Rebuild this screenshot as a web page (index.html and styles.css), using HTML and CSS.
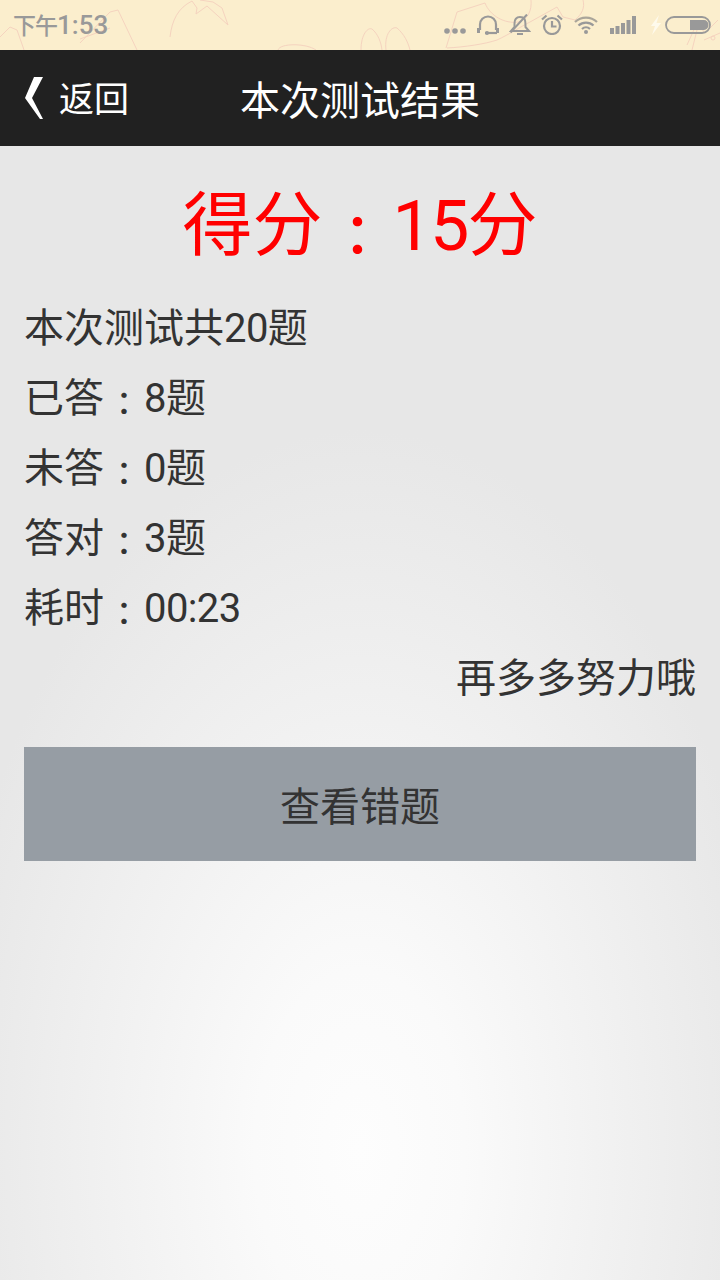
FILE: index.html
```html
<!DOCTYPE html>
<html lang="zh-CN">
<head>
<meta charset="utf-8">
<title>本次测试结果</title>
<link rel="stylesheet" href="styles.css">
</head>
<body>
<div class="status">
  <svg class="wall" width="720" height="50" viewBox="0 0 720 50" fill="none" stroke="#f5d3bf" stroke-width="1">
    <path d="M0 37L10 27L17 30L23 47L24 50"/>
    <path d="M80 43L110 12L118 10L137 50M80 39L110 28"/>
    <path d="M170 37C172 20 178 8 192 1L197 8L196 14L207 6L228 25L222 8L213 2L200 0"/>
    <path d="M278 50C280 43 306 43 316 50"/>
    <path d="M361 50C361 34 368 27 372 29C378 34 381 42 382 50M386 50C384 34 392 26 397 28C404 34 408 42 410 50"/>
    <path d="M446 48L457 12L485 3C490 16 505 24 518 22C528 20 532 10 531 0"/>
    <path d="M447 48C465 47 485 44 497 40C510 34 520 27 530 22L557 7L563 17L575 20C582 14 585 8 583 0"/>
    <path d="M687 45L697 23L705 33L718 20M698 26L692 50M704 40L720 33"/>
    <circle cx="713" cy="38" r="2"/>
  </svg>
  <span class="clock"><span class="clock-cjk">下午</span>1:53</span>
  <div class="indicators">
    <svg class="ico ico-dots" width="22" height="6" viewBox="0 0 22 6" fill="#999"><circle cx="3" cy="3" r="2.800"/><circle cx="11" cy="3" r="2.800"/><circle cx="19" cy="3" r="2.800"/></svg>
    <svg class="ico ico-head" width="22" height="20" viewBox="0 0 22 20" fill="none" stroke="#999" stroke-width="2.200"><path d="M3 15V9.500a8 8 0 0 1 16 0V15"/><path d="M1.500 13v5M20.500 13v5" stroke-width="3"/><path d="M8 18h12"/><circle cx="10" cy="18" r="2" fill="#999" stroke="none"/></svg>
    <svg class="ico ico-bell" width="22" height="21" viewBox="0 0 22 21" fill="none" stroke="#999" stroke-width="2"><path d="M5.500 13V9.500C5.500 5 8 3 11 3C13 3 14.500 3.500 15.500 5C16.500 6.500 16.500 9 16.500 13L20 17H2L5.500 13"/><path d="M8 20h6"/><path d="M1.500 18.500L18 0.500"/></svg>
    <svg class="ico ico-alarm" width="22" height="21" viewBox="0 0 22 21" fill="none" stroke="#999" stroke-width="2.200"><circle cx="11" cy="12" r="8"/><path d="M11 7v5.500h4.500"/><path d="M1 5.500L5.500 1.500M16.500 1.500L21 5.500"/></svg>
    <svg class="ico ico-wifi" width="24" height="18" viewBox="0 0 24 18" fill="none" stroke="#aaa59a" stroke-width="2.200"><path d="M1 6a16 16 0 0 1 22 0"/><path d="M4.500 9.500a11 11 0 0 1 15 0" stroke="#999"/><path d="M8 13a6 6 0 0 1 8 0" stroke="#999"/><circle cx="12" cy="16" r="2" fill="#999" stroke="none"/></svg>
    <svg class="ico ico-sig" width="26" height="18" viewBox="0 0 26 18" fill="#999"><rect x="0" y="12" width="4" height="6"/><rect x="5.500" y="10" width="4" height="8"/><rect x="11" y="7" width="4" height="11"/><rect x="16.500" y="4" width="4" height="14"/><rect x="22" y="0" width="4" height="18"/></svg>
    <svg class="ico ico-bolt" width="12" height="20" viewBox="0 0 12 20" fill="#fefaec"><path d="M9 0L1 11h4l-3 9 9-12H6.500z"/></svg>
    <svg class="ico ico-batt" width="46" height="18" viewBox="0 0 46 18"><rect x="1" y="1" width="44" height="16" rx="8" fill="none" stroke="#999" stroke-width="1.800"/><path d="M25 4h14a4.500 5 0 0 1 0 10H25z" fill="#999"/></svg>
  </div>
</div>
<header class="topbar">
  <div class="back">
    <svg class="chev" width="18" height="42" viewBox="0 0 18 42"><path d="M9 0H18L7 21L18 42H15L0 21Z" fill="#fff"/></svg>
    <span class="back-text">返回</span>
  </div>
  <h1 class="title">本次测试结果</h1>
</header>
<main class="content">
  <div class="score">得分<span class="colon" lang="zh-TW">：</span><span class="score-num">15</span>分</div>
  <ul class="stats">
    <li>本次测试共<span class="num">20</span>题</li>
    <li>已答<span class="colon" lang="zh-TW">：</span><span class="num">8</span>题</li>
    <li>未答<span class="colon" lang="zh-TW">：</span><span class="num">0</span>题</li>
    <li>答对<span class="colon" lang="zh-TW">：</span><span class="num">3</span>题</li>
    <li>耗时<span class="colon" lang="zh-TW">：</span><span class="num">00:23</span></li>
  </ul>
  <p class="cheer">再多多努力哦</p>
  <button class="review" type="button">查看错题</button>
</main>
</body>
</html>
```

FILE: styles.css
```css
* { box-sizing: border-box; }
html, body { margin: 0; padding: 0; }
body {
  width: 720px;
  height: 1280px;
  overflow: hidden;
  display: flex;
  flex-direction: column;
  font-family: Roboto, "Noto Sans CJK SC", sans-serif;
  background: #e7e7e7;
}
.status {
  position: relative;
  height: 50px;
  flex: none;
  display: flex;
  align-items: center;
  justify-content: space-between;
  padding: 0 9px 0 13px;
  background: #fbeecd;
  overflow: hidden;
}
.wall { position: absolute; left: 0; top: 0; }
.clock {
  position: relative;
  font-size: 26px;
  font-weight: 500;
  color: #999;
}
.clock-cjk { font-size: 23px; letter-spacing: -1px; line-height: 1; }
.indicators {
  position: relative;
  display: flex;
  align-items: flex-end;
  height: 24px;
  margin-bottom: 4px;
}
.ico { display: block; }
.ico-dots { margin-bottom: 1px; }
.ico-head { margin-left: 11px; }
.ico-bell { margin-left: 10px; }
.ico-alarm { margin-left: 10px; }
.ico-wifi { margin-left: 11px; margin-bottom: 1px; }
.ico-sig { margin-left: 12px; margin-bottom: 1px; }
.ico-bolt { margin-left: 14px; }
.ico-batt { margin-left: 3px; margin-bottom: 1px; }
.topbar {
  position: relative;
  height: 96px;
  flex: none;
  display: flex;
  align-items: center;
  justify-content: center;
  background: #212121;
  color: #fff;
}
.back {
  position: absolute;
  left: 25px;
  top: 27px;
  display: flex;
  align-items: flex-start;
  gap: 16px;
}
.back-text { font-size: 35px; line-height: 42px; margin-top: 3px; }
.title { margin: 0; font-size: 40px; font-weight: 400; }
.content {
  flex: 1;
  padding: 0 24px;
  background: radial-gradient(ellipse 420px 720px at 360px 1004px, #fdfdfd 0%, #fafafa 25%, #f1f1f1 60%, #e7e7e7 100%);
}
.colon {
  display: inline-block;
  width: 1.25em;
  text-align: center;
  font-family: "Noto Sans CJK TC", sans-serif;
  font-size: 0.8em;
  font-weight: 500;
  line-height: 1;
  vertical-align: -0.105em;
}
.score {
  margin-top: 39px;
  height: 82px;
  line-height: 82px;
  text-align: center;
  font-size: 70px;
  color: #f00;
}
.score-num { letter-spacing: -0.025em; }
.stats {
  list-style: none;
  margin: 27px 0 0;
  padding: 0;
}
.num { letter-spacing: -0.015em; }
.stats li, .cheer {
  height: 70px;
  line-height: 70px;
  font-size: 40px;
  color: #333;
}
.cheer { margin: 0; text-align: right; }
.review {
  display: block;
  width: 100%;
  height: 114px;
  margin-top: 33px;
  border: 0;
  background: #969da4;
  color: #333;
  font: inherit;
  font-size: 40px;
}
```
